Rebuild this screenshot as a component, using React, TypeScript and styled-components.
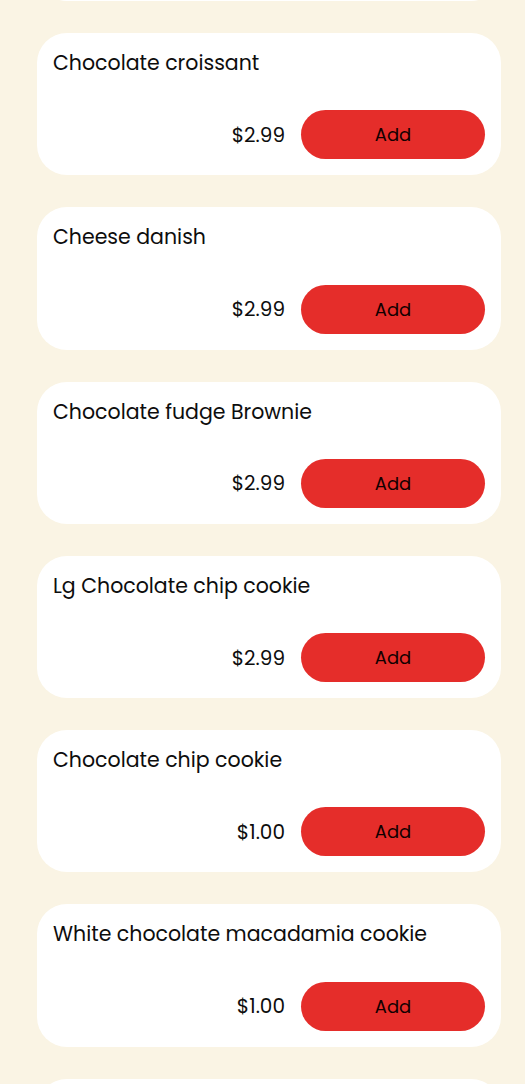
import React from "react";
import styled, { createGlobalStyle } from "styled-components";

const GlobalStyle = createGlobalStyle`
  html, body {
    margin: 0;
    padding: 0;
    background: #faf4e4;
    overflow: hidden;
  }
  body {
    font-family: Poppins, Inter, "Noto Sans", sans-serif;
    color: #111;
  }
`;

const items = [
  { name: "Butter croissant", price: "$2.99" },
  { name: "Chocolate croissant", price: "$2.99" },
  { name: "Cheese danish", price: "$2.99" },
  { name: "Chocolate fudge Brownie", price: "$2.99" },
  { name: "Lg Chocolate chip cookie", price: "$2.99" },
  { name: "Chocolate chip cookie", price: "$1.00" },
  { name: "White chocolate macadamia cookie", price: "$1.00" },
  { name: "Oatmeal raisin cookie", price: "$1.00" },
];

const Page = styled.div`
  width: 525px;
  height: 1084px;
  overflow: hidden;
  box-sizing: border-box;
  padding: 0 24px 0 37px;
`;

const List = styled.div`
  display: flex;
  flex-direction: column;
  gap: 32px;
  margin-top: -141.3px;
`;

const Card = styled.div`
  background: #fff;
  border-radius: 30px;
  padding: 16px;
  display: flex;
  flex-direction: column;
  gap: 31.3px;
`;

const Title = styled.div`
  font-size: 20.5px;
  line-height: 28px;
  margin-bottom: 2px;
  font-weight: 400;
  color: #0d0d0d;
`;

const Footer = styled.div`
  display: flex;
  justify-content: flex-end;
  align-items: center;
  gap: 16px;
`;

const Price = styled.span`
  font-size: 20px;
  line-height: 30px;
  color: #0d0d0d;
`;

const AddButton = styled.button`
  width: 184px;
  height: 49px;
  border: none;
  border-radius: 25px;
  background: #e52d2a;
  color: #120000;
  font-family: inherit;
  font-size: 18px;
  font-weight: 400;
  cursor: pointer;
`;

const App = () => (
  <Page>
    <GlobalStyle />
    <List>
      {items.map((item, index) => (
        <Card key={index}>
          <Title>{item.name}</Title>
          <Footer>
            <Price>{item.price}</Price>
            <AddButton>Add</AddButton>
          </Footer>
        </Card>
      ))}
    </List>
  </Page>
);

export default App;
